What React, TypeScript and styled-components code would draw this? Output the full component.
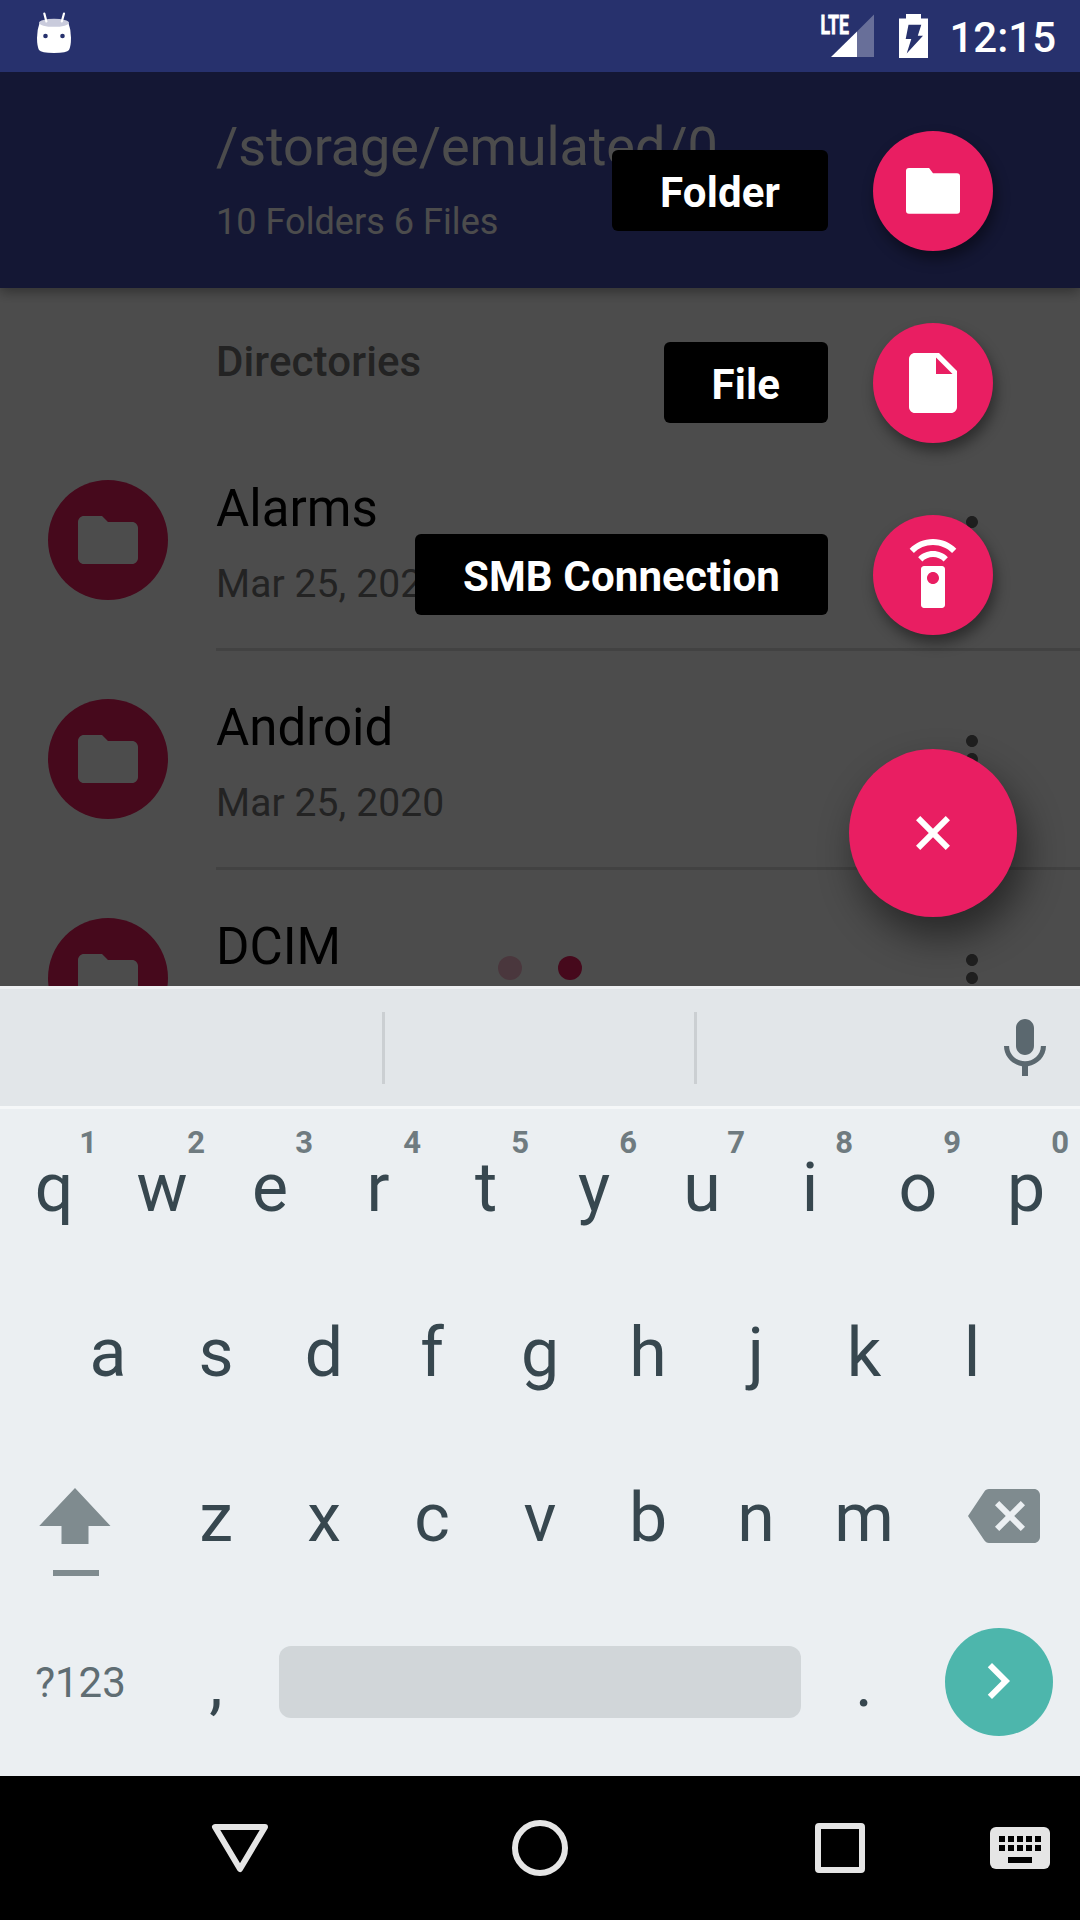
import React from "react";
import styled, { createGlobalStyle } from "styled-components";

const GlobalStyle = createGlobalStyle`
  * { box-sizing: border-box; }
  body { margin: 0; background: #000; }
  svg { display: block; flex: none; }
`;

const Screen = styled.div`
  width: 1080px;
  height: 1920px;
  overflow: hidden;
  display: flex;
  flex-direction: column;
  font-family: Roboto, "Noto Sans", sans-serif;
`;

/* ---------- status bar ---------- */

const StatusBar = styled.header`
  height: 72px;
  flex: none;
  display: flex;
  justify-content: space-between;
  background: #27316d;
  color: #fff;
`;

const StatusCluster = styled.div`
  display: flex;
  padding-right: 24px;
`;

const Clock = styled.span`
  margin-left: 19px;
  font-size: 42px;
  font-weight: 500;
  line-height: 76px;
`;

/* ---------- file browser ---------- */

const Browser = styled.main`
  position: relative;
  height: 914px;
  flex: none;
  overflow: hidden;
  display: flex;
  flex-direction: column;
  background: #fff;
`;

const PathHeader = styled.div`
  height: 216px;
  flex: none;
  padding: 43px 0 0 216px;
  background: #434eaf;
  color: #fff;
  box-shadow: 0 4px 12px rgba(0, 0, 0, 0.36);
`;

const PathTitle = styled.div`
  font-size: 54px;
  line-height: 64px;
  letter-spacing: -0.1px;
`;

const PathMeta = styled.div`
  margin-top: 21px;
  font-size: 36px;
  line-height: 44px;
  letter-spacing: 0.05px;
`;

const SectionTitle = styled.div`
  height: 144px;
  flex: none;
  padding-left: 216px;
  color: #757575;
  font-size: 42px;
  font-weight: 500;
  line-height: 147px;
  letter-spacing: 0.12px;
`;

const DirRow = styled.div`
  height: 219px;
  flex: none;
  display: flex;
  align-items: stretch;
  padding-left: 48px;
`;

const Avatar = styled.div`
  width: 120px;
  height: 120px;
  margin: 48px 48px 0 0;
  flex: none;
  display: flex;
  align-items: center;
  justify-content: center;
  border-radius: 50%;
  background: #e91e5e;
`;

const DirBody = styled.div`
  flex: 1;
  display: flex;
  justify-content: space-between;
  border-bottom: 3px solid #dedede;
`;

const DirText = styled.div`
  display: flex;
  flex-direction: column;
  padding-top: 47px;
`;

const DirName = styled.span`
  color: #000;
  font-size: 51px;
  line-height: 60px;
`;

const DirDate = styled.span`
  margin-top: 22px;
  color: #757575;
  font-size: 39px;
  line-height: 46px;
  letter-spacing: 0.1px;
`;

const MoreSlot = styled.div`
  padding: 72px 72px 0 0;
`;

const PageDots = styled.div`
  position: absolute;
  left: 498px;
  top: 884px;
  display: flex;
  gap: 36px;
`;

const PageDot = styled.i<{ $active?: boolean }>`
  width: 24px;
  height: 24px;
  border-radius: 50%;
  background: ${(p) => (p.$active ? "#e91e5e" : "#f8b9cc")};
`;

const Scrim = styled.div`
  position: absolute;
  inset: 0;
  background: rgba(0, 0, 0, 0.7);
`;

/* ---------- speed dial ---------- */

const SpeedDial = styled.div`
  position: absolute;
  top: 59px;
  right: 63px;
  display: flex;
  flex-direction: column;
  align-items: flex-end;
  gap: 72px;
`;

const DialItem = styled.div`
  display: flex;
  align-items: center;
  gap: 45px;
  height: 120px;
  margin-right: 24px;
`;

const DialLabel = styled.span`
  height: 81px;
  margin-bottom: 1px;
  padding: 0 48px;
  border-radius: 6px;
  background: #000;
  color: #fff;
  font-size: 42px;
  font-weight: 700;
  line-height: 85px;
  letter-spacing: 0.13px;
`;

const Fab = styled.button<{ $size: number }>`
  width: ${(p) => p.$size}px;
  height: ${(p) => p.$size}px;
  padding: 0;
  border: 0;
  border-radius: 50%;
  display: flex;
  align-items: center;
  justify-content: center;
  background: #e91e62;
  box-shadow: ${(p) =>
    p.$size > 120 ? "8px 20px 38px rgba(0,0,0,.48)" : "3px 8px 14px rgba(0,0,0,.42)"};
`;

const MainFab = styled(Fab)`
  margin-top: 42px;
`;

/* ---------- keyboard ---------- */

const Keyboard = styled.section`
  flex: none;
  height: 790px;
  background: #ebeff2;
`;

const Suggestions = styled.div`
  height: 123px;
  display: flex;
  align-items: center;
  border-top: 3px solid #eef0f2;
  border-bottom: 3px solid #f5f7f8;
  background: #e2e6e9;
`;

const Suggestion = styled.div<{ $width: number }>`
  width: ${(p) => p.$width}px;
  height: 72px;
  margin-bottom: -1px;
  border-right: 3px solid #cbcfd2;
`;

const MicSlot = styled.div`
  margin: 2px 19px 0 auto;
`;

const KeyRow = styled.div<{ $first?: boolean; $inset?: number }>`
  height: ${(p) => (p.$first ? 161 : 165)}px;
  padding: 0 ${(p) => p.$inset ?? 0}px;
  display: flex;
  align-items: flex-end;
`;

const Key = styled.div<{ $width?: number; $small?: boolean }>`
  position: relative;
  width: ${(p) => p.$width ?? 108}px;
  height: 165px;
  display: flex;
  align-items: center;
  justify-content: center;
  color: ${(p) => (p.$small ? "#5f6d73" : "#37474f")};
  font-size: ${(p) => (p.$small ? 42 : 68)}px;
  line-height: 165px;
`;

const Letter = styled.span`
  padding-top: 2px;
`;

const SymbolsLabel = styled.span`
  padding-right: 1px;
`;

const Hint = styled.span`
  position: absolute;
  top: 20px;
  right: 11px;
  color: #6f7b80;
  font-size: 31px;
  font-weight: 700;
  line-height: 36px;
`;

const SpaceBar = styled.div`
  width: 522px;
  height: 72px;
  margin-bottom: 1px;
  border-radius: 12px;
  background: #d1d6d9;
`;

const EnterKey = styled.div`
  width: 108px;
  height: 108px;
  margin-bottom: 1px;
  border-radius: 50%;
  display: flex;
  align-items: center;
  justify-content: center;
  padding: 0 2px 2px 0;
  background: #4db6ac;
`;

const ShiftSlot = styled.div`
  padding: 31px 12px 0 0;
`;

const BackspaceSlot = styled.div`
  padding: 0 0 3px 10px;
`;

/* ---------- navigation bar ---------- */

const NavBar = styled.nav`
  height: 144px;
  flex: none;
  display: flex;
  align-items: center;
  padding-left: 90px;
  background: #000;
`;

const NavButton = styled.div<{ $width: number }>`
  width: ${(p) => p.$width}px;
  display: flex;
  justify-content: center;
`;

/* ---------- icons ---------- */

const Glyph = ({ d, color = "#fff", turn }: { d: string; color?: string; turn?: boolean }) => (
  <svg width="72" height="72" viewBox="0 0 24 24" fill={color}>
    <path d={d} transform={turn ? "rotate(45 12 12)" : undefined} />
  </svg>
);

const paths = {
  folder: "M10 4H4c-1.1 0-1.99.9-1.99 2L2 18c0 1.1.9 2 2 2h16c1.1 0 2-.9 2-2V8c0-1.1-.9-2-2-2h-8l-2-2z",
  dialFolder:
    "M4 4.33H10.7L12 6.1H20Q21 6.1 21 7.1V18.6Q21 19.6 20 19.6H4Q3 19.6 3 18.6V5.33Q3 4.33 4 4.33z",
  file: "M6 2c-1.1 0-1.99.9-1.99 2L4 20c0 1.1.89 2 1.99 2H18c1.1 0 2-.9 2-2V8l-6-6H6zm7 7V3.5L18.5 9H13z",
  remote:
    "M15 9H9c-.55 0-1 .45-1 1v12c0 .55.45 1 1 1h6c.55 0 1-.45 1-1V10c0-.55-.45-1-1-1zm-3 6c-1.1 0-2-.9-2-2s.9-2 2-2 2 .9 2 2-.9 2-2 2zM7.05 6.05l1.41 1.41C9.37 6.56 10.62 6 12 6s2.63.56 3.54 1.46l1.41-1.41C15.68 4.78 13.93 4 12 4s-3.68.78-4.95 2.05zM12 0C8.96 0 6.21 1.23 4.22 3.22l1.41 1.41C7.26 3.01 9.51 2 12 2s4.74 1.01 6.36 2.64l1.41-1.41C17.79 1.23 15.04 0 12 0z",
  add: "M19 13h-6v6h-2v-6H5v-2h6V5h2v6h6v2z",
  more: "M12 8c1.1 0 2-.9 2-2s-.9-2-2-2-2 .9-2 2 .9 2 2 2zm0 2c-1.1 0-2 .9-2 2s.9 2 2 2 2-.9 2-2-.9-2-2-2zm0 6c-1.1 0-2 .9-2 2s.9 2 2 2 2-.9 2-2-.9-2-2-2z",
  mic: "M12 14c1.66 0 2.99-1.34 2.99-3L15 5c0-1.66-1.34-3-3-3S9 3.34 9 5v6c0 1.66 1.34 3 3 3zm5.3-3c0 3-2.54 5.1-5.3 5.1S6.7 14 6.7 11H5c0 3.41 2.72 6.23 6 6.72V21h2v-3.28c3.28-.48 6-3.3 6-6.72h-1.7z",
  backspace:
    "M22 3H7c-.69 0-1.23.35-1.59.88L0 12l5.41 8.11c.36.53.9.89 1.59.89h15c1.1 0 2-.9 2-2V5c0-1.1-.9-2-2-2zm-3 12.59L17.59 17 14 13.41 10.41 17 9 15.59 12.59 12 9 8.41 10.41 7 14 10.59 17.59 7 19 8.41 15.41 12 19 15.59z",
  chevron: "M10 6L8.59 7.41 13.17 12l-4.58 4.59L10 18l6-6z",
};

const DroidIcon = () => (
  <svg width="108" height="72" viewBox="0 0 108 72">
    <path
      d="M39.5 23Q37 30 37 38Q37 46 39 50Q41 53 54 53Q67 53 69 50Q71 46 71 38Q71 30 68.5 23z"
      fill="#fff"
    />
    <ellipse cx="54" cy="22.8" rx="15" ry="4" fill="#c9cbdc" />
    <path d="M44.3 13.5L46.4 21.5M64 13.5L61.8 21.5" stroke="#fff" strokeWidth="2.2" strokeLinecap="round" />
    <circle cx="45.5" cy="36" r="2.3" fill="#27316d" />
    <circle cx="62.5" cy="36" r="2.3" fill="#27316d" />
  </svg>
);

const SignalIcon = () => (
  <svg width="58" height="72" viewBox="820 0 58 72" fill="#fff">
    <text
      x="820.5"
      y="33.5"
      fontSize="26"
      fontWeight="700"
      textLength="28.5"
      lengthAdjust="spacingAndGlyphs"
      stroke="#fff"
      strokeWidth="0.8"
    >
      LTE
    </text>
    <path d="M831 57L857 31.5V57z" />
    <path d="M857 31.5L874 14.5V57H857z" opacity=".3" />
  </svg>
);

const BatteryIcon = () => (
  <svg width="52" height="72" viewBox="878 0 52 72">
    <path
      fill="#fff"
      fillRule="evenodd"
      d="M906 14h15v4.5h7V58h-29V18.5h7zM908.5 24.7L905.7 39H911.3L906.7 53.5L923 35.7H917.8L921.3 24.7z"
    />
  </svg>
);

const ShiftIcon = () => (
  <svg width="72" height="90" viewBox="39 1488 72 90" fill="#7f8b8f">
    <path d="M75 1488L110.5 1526H88.5V1544H61.5V1526H39.2z" />
    <rect x="53" y="1570" width="46" height="6" />
  </svg>
);

const navColor = "#e5e5e5";

const BackIcon = () => (
  <svg width="60" height="60" viewBox="0 0 60 60">
    <path d="M5 9H55L30 51z" fill="none" stroke={navColor} strokeWidth="6" strokeLinejoin="round" />
  </svg>
);

const HomeIcon = () => (
  <svg width="60" height="60" viewBox="0 0 60 60">
    <circle cx="30" cy="30" r="25" fill="none" stroke={navColor} strokeWidth="6" />
  </svg>
);

const RecentsIcon = () => (
  <svg width="60" height="60" viewBox="0 0 60 60">
    <rect x="8" y="8" width="44" height="44" rx="1" fill="none" stroke={navColor} strokeWidth="6" strokeLinejoin="round" />
  </svg>
);

const KeyboardIcon = () => (
  <svg width="60" height="42" viewBox="0 0 60 42">
    <rect width="60" height="42" rx="6" fill={navColor} />
    {[9, 18].map((y) =>
      [9, 18, 27, 36, 45].map((x) => <rect key={`${x}-${y}`} x={x} y={y} width="6" height="6" />)
    )}
    <rect x="18" y="30" width="24" height="6" />
  </svg>
);

/* ---------- content ---------- */

const directories: { name: string; date?: string }[] = [
  { name: "Alarms", date: "Mar 25, 2020" },
  { name: "Android", date: "Mar 25, 2020" },
  { name: "DCIM" },
];

const dialItems = [
  { label: "Folder", icon: paths.dialFolder },
  { label: "File", icon: paths.file },
  { label: "SMB Connection", icon: paths.remote },
];

export default function App() {
  return (
    <>
      <GlobalStyle />
      <Screen>
        <StatusBar>
          <DroidIcon />
          <StatusCluster>
            <SignalIcon />
            <BatteryIcon />
            <Clock>12:15</Clock>
          </StatusCluster>
        </StatusBar>

        <Browser>
          <PathHeader>
            <PathTitle>/storage/emulated/0</PathTitle>
            <PathMeta>10 Folders 6 Files</PathMeta>
          </PathHeader>
          <SectionTitle>Directories</SectionTitle>
          {directories.map((dir) => (
            <DirRow key={dir.name}>
              <Avatar>
                <Glyph d={paths.folder} />
              </Avatar>
              <DirBody>
                <DirText>
                  <DirName>{dir.name}</DirName>
                  {dir.date && <DirDate>{dir.date}</DirDate>}
                </DirText>
                <MoreSlot>
                  <Glyph d={paths.more} color="#686868" />
                </MoreSlot>
              </DirBody>
            </DirRow>
          ))}
          <PageDots>
            <PageDot />
            <PageDot $active />
          </PageDots>
          <Scrim />
          <SpeedDial>
            {dialItems.map((item) => (
              <DialItem key={item.label}>
                <DialLabel>{item.label}</DialLabel>
                <Fab $size={120}>
                  <Glyph d={item.icon} />
                </Fab>
              </DialItem>
            ))}
            <MainFab $size={168}>
              <Glyph d={paths.add} turn />
            </MainFab>
          </SpeedDial>
        </Browser>

        <Keyboard>
          <Suggestions>
            <Suggestion $width={385} />
            <Suggestion $width={312} />
            <MicSlot>
              <Glyph d={paths.mic} color="#5b686f" />
            </MicSlot>
          </Suggestions>
          <KeyRow $first>
            {[..."qwertyuiop"].map((letter, i) => (
              <Key key={letter}>
                <Letter>{letter}</Letter>
                <Hint>{(i + 1) % 10}</Hint>
              </Key>
            ))}
          </KeyRow>
          <KeyRow $inset={54}>
            {[..."asdfghjkl"].map((letter) => (
              <Key key={letter}>
                <Letter>{letter}</Letter>
              </Key>
            ))}
          </KeyRow>
          <KeyRow>
            <Key $width={162}>
              <ShiftSlot>
                <ShiftIcon />
              </ShiftSlot>
            </Key>
            {[..."zxcvbnm"].map((letter) => (
              <Key key={letter}>
                <Letter>{letter}</Letter>
              </Key>
            ))}
            <Key $width={162}>
              <BackspaceSlot>
                <Glyph d={paths.backspace} color="#7f8b8f" />
              </BackspaceSlot>
            </Key>
          </KeyRow>
          <KeyRow>
            <Key $width={162} $small>
              <SymbolsLabel>?123</SymbolsLabel>
            </Key>
            <Key>
              <Letter>,</Letter>
            </Key>
            <Key $width={540}>
              <SpaceBar />
            </Key>
            <Key>
              <Letter>.</Letter>
            </Key>
            <Key $width={162}>
              <EnterKey>
                <Glyph d={paths.chevron} />
              </EnterKey>
            </Key>
          </KeyRow>
        </Keyboard>

        <NavBar>
          <NavButton $width={300}>
            <BackIcon />
          </NavButton>
          <NavButton $width={300}>
            <HomeIcon />
          </NavButton>
          <NavButton $width={300}>
            <RecentsIcon />
          </NavButton>
          <NavButton $width={60}>
            <KeyboardIcon />
          </NavButton>
        </NavBar>
      </Screen>
    </>
  );
}
